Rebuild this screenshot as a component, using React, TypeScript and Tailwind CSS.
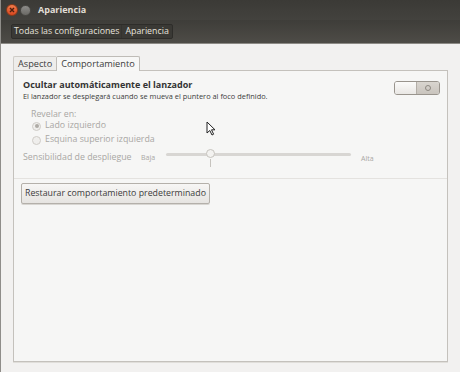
import React from "react";

function Radio({ checked, label }: { checked?: boolean; label: string }) {
  return (
    <div className="flex items-center h-[12px]">
      <div className="w-[9px] h-[9px] rounded-full border border-[#cfccc7] bg-[#efeeec] flex items-center justify-center">
        {checked && <div className="w-[4px] h-[4px] rounded-full bg-[#aeaba6]" />}
      </div>
      <span className="ml-[4px] text-[8.8px] text-[#a9a7a4] whitespace-nowrap">{label}</span>
    </div>
  );
}

export default function App() {
  return (
    <div className="w-[460px] h-[372px] bg-[#f2f1f0] relative overflow-hidden flex flex-col font-['Open_Sans',sans-serif] border-l border-[#8f8d89]">
      {/* Title bar */}
      <div className="h-[20px] bg-gradient-to-b from-[#3b3a36] to-[#43423e] flex items-center pl-[5px]">
        <div className="w-[12px] h-[12px] rounded-full bg-gradient-to-b from-[#f07a4a] to-[#d8461f] flex items-center justify-center border border-[#8a3a1a]">
          <svg width="6" height="6" viewBox="0 0 6 6">
            <path d="M1 1L5 5M5 1L1 5" stroke="#4a2010" strokeWidth="1.4" />
          </svg>
        </div>
        <div className="ml-[2px] w-[11px] h-[11px] rounded-full bg-gradient-to-b from-[#8e8d8a] to-[#6a6965] border border-[#4a4945]" />
        <span className="ml-[7px] text-[9px] font-bold text-[#e2ded6]">Apariencia</span>
      </div>
      {/* Toolbar */}
      <div className="h-[24px] bg-gradient-to-b from-[#3e3d39] to-[#4e4c47] border-b border-[#8c8a85] flex items-center pl-[10px]">
        <div className="flex h-[15px] border border-[#2e2d2a] bg-[#3a3935] rounded-[2px] text-[8.8px] text-[#e6e3dd] items-center whitespace-nowrap">
          <span className="px-[2px] leading-[13px]">Todas las configuraciones</span>
          <span className="px-[3px] leading-[13px] border-l border-[#34332f]">Apariencia</span>
        </div>
      </div>
      {/* Content */}
      <div className="flex-1 px-[12px] pt-[11px] pb-[10px] flex flex-col">
        <div className="flex items-end h-[15px] text-[9.2px] text-[#3c3c3c] whitespace-nowrap">
          <div className="h-[14px] px-[4px] border-l border-t border-[#cfccc7] rounded-tl-[2px] leading-[13px] bg-[#eeedeb]">Aspecto</div>
          <div className="h-[15px] px-[4px] border border-b-0 border-[#bfbcb7] rounded-t-[2px] bg-[#f7f7f6] leading-[14px] relative top-[1px]">Comportamiento</div>
        </div>
        <div className="flex-1 bg-[#f6f6f5] border border-[#c4c1bc] shadow-[0_1px_0_#e0deda] flex flex-col">
          <div className="flex pl-[9px] pr-[7px] pt-[7px]">
            <div className="flex-1 whitespace-nowrap">
              <div className="text-[9px] font-bold text-[#333333] leading-[13px]">Ocultar automáticamente el lanzador</div>
              <div className="text-[7.4px] text-[#3c3c3c] leading-[11px]">El lanzador se desplegará cuando se mueva el puntero al foco definido.</div>
            </div>
            <div className="w-[46px] h-[14px] mt-[3px] rounded-[3px] border border-[#99948d] flex overflow-hidden">
              <div className="w-[22px] bg-gradient-to-b from-[#fbfbfa] to-[#e9e7e4] border-r border-[#b3aea7]" />
              <div className="flex-1 bg-gradient-to-b from-[#d9d5cf] to-[#c9c4bd] flex items-center justify-center">
                <div className="w-[6px] h-[6px] rounded-full border border-[#8d8881]" />
              </div>
            </div>
          </div>
          <div className="pl-[17px] mt-[6px] flex flex-col">
            <div className="text-[8.8px] text-[#a9a7a4] leading-[12px] h-[12px]">Revelar en:</div>
            <div className="pl-[1px] flex flex-col gap-[2px]">
              <Radio checked label="Lado izquierdo" />
              <Radio label="Esquina superior izquierda" />
            </div>
          </div>
          <div className="flex items-center pl-[9px] mt-[5px] h-[14px] whitespace-nowrap">
            <span className="text-[8.8px] text-[#a9a7a4] w-[118px]">Sensibilidad de despliegue</span>
            <span className="text-[7px] text-[#a9a7a4] w-[25px]">Baja</span>
            <div className="relative w-[185px] h-[14px]">
              <div className="absolute left-0 right-0 top-[2px] h-[3px] rounded-full bg-[#d8d6d3]" />
              <div className="absolute left-[40px] top-[-2px] w-[9px] h-[9px] rounded-full border border-[#c6c3be] bg-[#f3f2f0]" />
              <div className="absolute left-[44px] top-[8px] w-[1px] h-[8px] bg-[#c6c3be]" />
            </div>
            <span className="ml-[10px] text-[7px] text-[#a9a7a4] mt-[2px]">Alta</span>
          </div>
          <div className="mt-[13px] h-[1px] bg-[#e4e2df]" />
          <div className="flex items-start pl-[7px] pt-[4px]">
            <div className="flex h-[21px] items-center px-[3px] border border-[#b4b0aa] rounded-[2px] bg-gradient-to-b from-[#f7f6f5] to-[#e6e4e1] text-[8.8px] text-[#3c3c3c] shadow-[0_1px_0_#d8d6d2] whitespace-nowrap">
              Restaurar comportamiento predeterminado
            </div>
          </div>
        </div>
      </div>
      {/* Cursor */}
      <svg className="absolute left-[205px] top-[121px]" width="11" height="15" viewBox="0 0 11 15">
        <path d="M1 1L1 12L3.8 9.5L6 14L7.6 13.2L5.5 8.8L9 8.8Z" fill="#ffffff" stroke="#222" strokeWidth="1" strokeLinejoin="round" />
      </svg>
    </div>
  );
}
